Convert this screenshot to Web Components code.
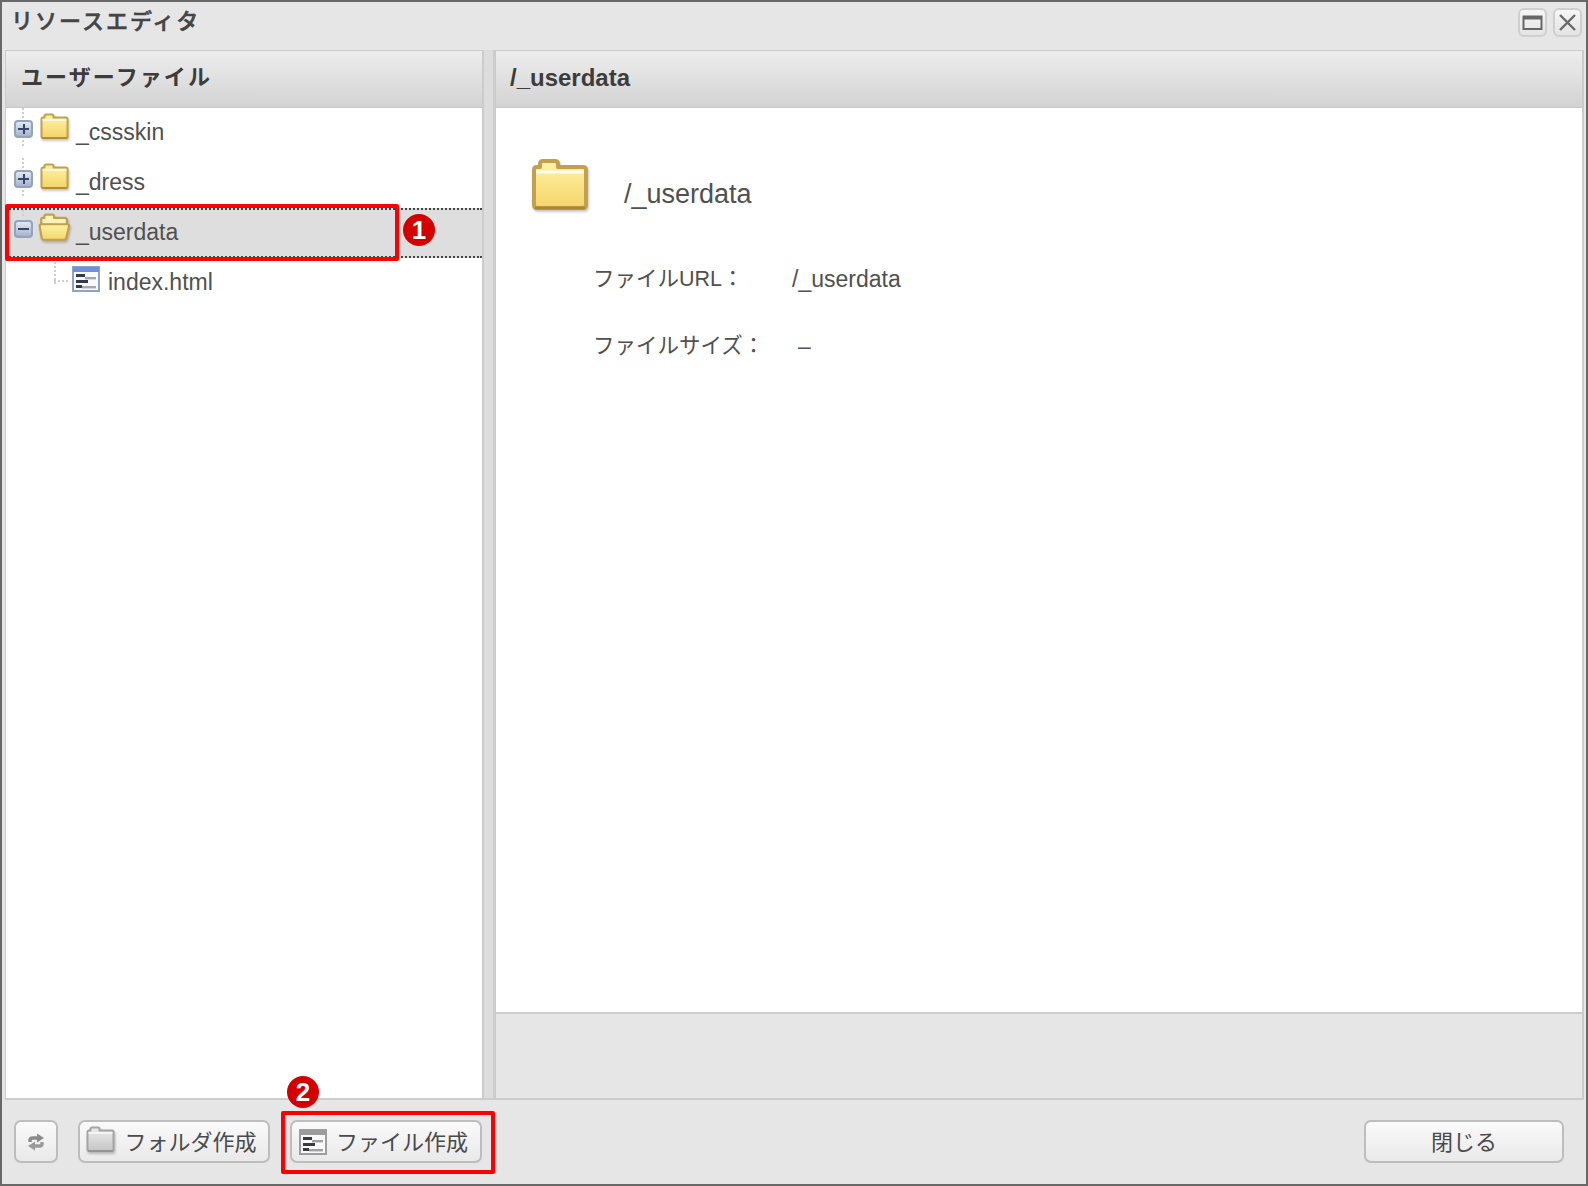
<!DOCTYPE html>
<html lang="ja">
<head>
<meta charset="utf-8">
<title>リソースエディタ</title>
<style>
html, body {
    margin: 0;
    padding: 0;
}
body {
    color: #4a4a4a;
    font-family: "Liberation Sans", "Noto Sans CJK JP", sans-serif;
}
</style>
</head>
<body>

<res-window>
    <res-titlebar slot="title">リソースエディタ</res-titlebar>

    <res-panel slot="left" heading="ユーザーファイル">
        <tree-row state="closed" guide="full"><folder-icon slot="icon"></folder-icon>_cssskin</tree-row>
        <tree-row state="closed" guide="full"><folder-icon slot="icon"></folder-icon>_dress</tree-row>
        <tree-row state="open" guide="top" selected><folder-icon slot="icon" open width="31"></folder-icon>_userdata</tree-row>
        <tree-row state="leaf"><file-icon slot="icon"></file-icon>index.html</tree-row>
    </res-panel>

    <res-panel slot="right" heading="/_userdata" latin footer>
        <file-details name="/_userdata" url="/_userdata" size="–"></file-details>
    </res-panel>

    <res-button slot="tools" square><refresh-icon slot="icon"></refresh-icon></res-button>
    <res-button slot="tools" width="192" shifted><folder-icon slot="icon" gray></folder-icon>フォルダ作成</res-button>
    <res-button slot="tools" width="192" shifted><file-icon slot="icon" gray></file-icon>ファイル作成</res-button>
    <res-button slot="actions" width="200">閉じる</res-button>

    <res-callout slot="over" n="1" box="5,204,394,57" badge="419,230"></res-callout>
    <res-callout slot="over" n="2" box="281,1111,214,63" badge="303,1092"></res-callout>
</res-window>

<script>
// window shell
let winTpl = document.createElement('template');
winTpl.innerHTML = `
<style>
:host {
    background: #e6e6e6;
    border: 2px solid #686868;
    box-sizing: border-box;
    display: flex;
    flex-direction: column;
    height: 1186px;
    position: relative;
    width: 1588px;
}
.panels {
    display: flex;
    flex: 1;
    min-height: 0;
    padding-left: 3px;
}
.gutter {
    background: #dddddd;
    border-bottom: 2px solid #cccccc;
    border-right: 3px solid #cccccc;
    flex: none;
    width: 9px;
}
.left { display: flex; flex: none; width: 479px; }
.right { display: flex; flex: 1; min-width: 0; padding-right: 2px; }
.foot {
    box-sizing: border-box;
    display: flex;
    flex: none;
    height: 84px;
    justify-content: space-between;
    padding: 20px 22px 0 12px;
}
.group { display: flex; gap: 20px; }
</style>
<slot name="title"></slot>
<div class="panels">
    <div class="left"><slot name="left"></slot></div>
    <div class="gutter"></div>
    <div class="right"><slot name="right"></slot></div>
</div>
<div class="foot">
    <div class="group"><slot name="tools"></slot></div>
    <div class="group"><slot name="actions"></slot></div>
</div>
<slot name="over"></slot>
`;
class ResWindow extends HTMLElement {
    constructor() {
        super();
        this.attachShadow({mode: 'open'}).appendChild(winTpl.content.cloneNode(true));
    }
}
customElements.define('res-window', ResWindow);

// title bar with the two window buttons
let titleTpl = document.createElement('template');
titleTpl.innerHTML = `
<style>
:host {
    align-items: flex-start;
    box-sizing: border-box;
    color: #444444;
    display: flex;
    flex: none;
    font-family: "Noto Sans CJK JP", sans-serif;
    font-size: 22px;
    font-weight: 500;
    height: 48px;
    justify-content: space-between;
    letter-spacing: 2px;
    padding: 0 4px 0 9px;
}
.text { line-height: 35px; -webkit-text-stroke: 0.5px #444444; }
.btns { display: flex; gap: 6px; padding-top: 6px; }
.btn {
    background: linear-gradient(#f6f6f6, #e4e4e4);
    border: 2px solid #cfcfcf;
    border-radius: 6px;
    box-sizing: border-box;
    display: block;
    height: 29px;
    width: 29px;
}
svg { display: block; }
</style>
<div class="text"><slot></slot></div>
<div class="btns">
    <div class="btn"><svg width="25" height="25" viewBox="0 0 25 25"><rect x="3.5" y="6.5" width="18" height="12.5" fill="none" stroke="#666" stroke-width="2"/><rect x="3" y="6" width="19" height="3.5" fill="#666"/></svg></div>
    <div class="btn"><svg width="25" height="25" viewBox="0 0 25 25"><path d="M5 5 L20 20 M20 5 L5 20" fill="none" stroke="#6a6a6a" stroke-width="2.4"/></svg></div>
</div>
`;
class ResTitlebar extends HTMLElement {
    constructor() {
        super();
        this.attachShadow({mode: 'open'}).appendChild(titleTpl.content.cloneNode(true));
    }
}
customElements.define('res-titlebar', ResTitlebar);

// panel: heading, body, optional grey strip below
let panelTpl = document.createElement('template');
panelTpl.innerHTML = `
<style>
:host {
    border: 1px solid #cccccc;
    border-bottom-width: 2px;
    border-right-width: 2px;
    box-sizing: border-box;
    display: flex;
    flex: 1;
    flex-direction: column;
    min-width: 0;
}
:host([latin]) { border-left: none; border-right-width: 2px; }
.head {
    background: linear-gradient(#ededed, #d3d3d3);
    border-bottom: 1px solid #c8c8c8;
    box-sizing: border-box;
    color: #3c3c3c;
    flex: none;
    font-family: "Noto Sans CJK JP", sans-serif;
    font-size: 22px;
    font-weight: 700;
    height: 57px;
    letter-spacing: 2.1px;
    line-height: 48px;
    padding-left: 15px;
}
:host([latin]) .head {
    font-family: "Liberation Sans", sans-serif;
    font-size: 24px;
    letter-spacing: 0;
    line-height: 53px;
    padding-left: 14px;
}
.body { background: #ffffff; flex: 1; min-height: 0; }
.strip {
    border-top: 2px solid #cccccc;
    display: none;
    flex: none;
    height: 84px;
}
:host([footer]) .strip { display: block; }
</style>
<div class="head"></div>
<div class="body"><slot></slot></div>
<div class="strip"></div>
`;
class ResPanel extends HTMLElement {
    constructor() {
        super();
        this.attachShadow({mode: 'open'}).appendChild(panelTpl.content.cloneNode(true));
        this.shadowRoot.querySelector('.head').textContent = this.getAttribute('heading');
    }
}
customElements.define('res-panel', ResPanel);

// one row of the file tree
let rowTpl = document.createElement('template');
rowTpl.innerHTML = `
<style>
:host {
    --nudge: 0px;
    box-sizing: border-box;
    color: #505050;
    display: flex;
    font-size: 23px;
    height: 50px;
    line-height: 48px;
    padding-left: 8px;
    position: relative;
}
:host([selected]) {
    --nudge: -2px;
    background: #dedede;
    border-bottom: 2px dotted #444444;
    border-top: 2px dotted #444444;
    line-height: 44px;
}
:host([state="leaf"]) { padding-left: 66px; }
.exp {
    background: linear-gradient(#e3e8f1, #a7b3ca);
    border: 2px solid #93a2bd;
    border-radius: 4px;
    box-sizing: border-box;
    flex: none;
    height: 18px;
    margin: calc(12px + var(--nudge)) 7px 0 0;
    position: relative;
    width: 19px;
}
.exp::before {
    background: #34456b;
    content: "";
    height: 2px;
    left: 2px;
    position: absolute;
    top: 6px;
    width: 11px;
}
.exp::after {
    background: #34456b;
    content: "";
    height: 10px;
    left: 6.5px;
    position: absolute;
    top: 2px;
    width: 2px;
}
:host([state="open"]) .exp::after { display: none; }
:host([state="leaf"]) .exp { display: none; }
.ico { flex: none; margin: calc(5px + var(--nudge)) 7px 0 0; width: 29px; }
:host([state="leaf"]) .ico { margin-top: 8px; margin-right: 8px; width: 28px; }
.guide {
    background: repeating-linear-gradient(#cfcfcf 0 2px, transparent 2px 4px);
    left: 16px;
    position: absolute;
    top: 0;
    width: 2px;
}
.hook {
    display: none;
    background: repeating-linear-gradient(90deg, #cfcfcf 0 2px, transparent 2px 4px);
    height: 2px;
    left: 48px;
    position: absolute;
    top: 22px;
    width: 14px;
}
:host([guide="full"]) .guide { height: 38px; }
:host([guide="top"]) .guide { height: 8px; }
:host([state="leaf"]) .guide { height: 22px; left: 48px; top: 4px; }
:host([state="leaf"]) .hook { display: block; }
</style>
<div class="guide"></div>
<div class="hook"></div>
<div class="exp"></div>
<div class="ico"><slot name="icon"></slot></div>
<div class="label"><slot></slot></div>
`;
class TreeRow extends HTMLElement {
    constructor() {
        super();
        this.attachShadow({mode: 'open'}).appendChild(rowTpl.content.cloneNode(true));
    }
}
customElements.define('tree-row', TreeRow);

// folder icon, scales with the width attribute
let folderSeq = 0;
class FolderIcon extends HTMLElement {
    constructor() {
        super();
        let w = this.getAttribute('width') || 29;
        let h = Math.round(w * 54 / 58);
        let id = 'f' + (++folderSeq);
        let gray = this.hasAttribute('gray');
        let top = gray ? '#ececec' : '#fff3a8';
        let bot = gray ? '#c6c6c6' : '#f4d468';
        let edge = gray ? '#a4a4a4' : '#c4a04c';
        let shape = `<path d="M3 47 V12 Q3 9 6 9 H9 V6 Q9 3 12 3 H24 Q27 3 27 6 V9 H52 Q55 9 55 12 V47 Q55 50 52 50 H6 Q3 50 3 47 Z" fill="url(#${id})" stroke="${edge}" stroke-width="4" stroke-linejoin="round"/>
            <path d="M5 14 H53" stroke="${gray ? '#fafafa' : '#fffdf0'}" stroke-width="3"/>
            <path d="M4 50 H54" stroke="${gray ? '#8f8f8f' : '#ab8635'}" stroke-width="3"/>`;
        if (this.hasAttribute('open')) {
            shape = `<path d="M6 40 V12 Q6 9 9 9 H12 V6 Q12 3 15 3 H27 Q30 3 30 6 V9 H50 Q54 9 54 12 V22 H6 Z" fill="#fff3b8" stroke="${edge}" stroke-width="4" stroke-linejoin="round"/>
            <path d="M3 24 Q3 21 6 21 H55 Q59 21 58 24 L53 47 Q52 50 49 50 H11 Q8 50 7 47 Z" fill="url(#${id})" stroke="${edge}" stroke-width="4" stroke-linejoin="round"/>`;
        }
        this.attachShadow({mode: 'open'}).innerHTML = `
<style>
:host { display: block; line-height: 0; width: ${w}px; height: ${h}px; }
:host([open]) { margin-left: -2px; }
svg { overflow: visible; filter: blur(.35px) drop-shadow(1px 2px 1px rgba(0,0,0,.22)); }
</style>
<svg width="${w}" height="${h}" viewBox="0 0 58 54">
    <defs><linearGradient id="${id}" x1="0" y1="0" x2="0" y2="1"><stop offset="0" stop-color="${top}"/><stop offset="1" stop-color="${bot}"/></linearGradient></defs>
    ${shape}
</svg>`;
    }
}
customElements.define('folder-icon', FolderIcon);

// html file icon
class FileIcon extends HTMLElement {
    constructor() {
        super();
        let gray = this.hasAttribute('gray');
        let bar = gray ? '#9c9c9c' : '#6f90dc';
        let edge = gray ? '#9e9e9e' : '#8fa2c8';
        let ink = gray ? '#3a3a3a' : '#343a4c';
        let soft = gray ? '#a0a0a0' : '#a8a8a8';
        this.attachShadow({mode: 'open'}).innerHTML = `
<style>
:host { display: block; height: 26px; line-height: 0; width: 28px; }
:host([gray]) { margin-top: 4px; }
svg { filter: blur(.25px); }
</style>
<svg width="28" height="26" viewBox="0 0 28 26">
    <rect x="1" y="1" width="26" height="24" fill="#f8f9fb" stroke="${edge}" stroke-width="2"/>
    <rect x="1" y="1" width="26" height="5" fill="${bar}"/>
    <rect x="4" y="8" width="9" height="3" fill="${ink}"/>
    <rect x="13" y="11" width="11" height="2.4" fill="${soft}"/>
    <rect x="4" y="14" width="12" height="3" fill="${ink}"/>
    <rect x="4" y="19" width="6" height="3" fill="${ink}"/>
    <rect x="10" y="20" width="14" height="2.4" fill="${soft}"/>
</svg>`;
    }
}
customElements.define('file-icon', FileIcon);

// refresh arrows
let refreshTpl = document.createElement('template');
refreshTpl.innerHTML = `
<style>
:host { display: block; height: 18px; line-height: 0; margin-top: 4px; width: 18px; }
</style>
<svg width="18" height="18" viewBox="0 0 18 18">
    <path d="M3 9 V7 Q3 5 5.5 5 H11" fill="none" stroke="#8a8a8a" stroke-width="3.4"/>
    <path d="M10 0.5 L17 5 L10 9.5 Z" fill="#8a8a8a"/>
    <path d="M15 9 V11 Q15 13 12.5 13 H7" fill="none" stroke="#9a9a9a" stroke-width="3.4"/>
    <path d="M8 8.5 L1 13 L8 17.5 Z" fill="#9a9a9a"/>
</svg>`;
class RefreshIcon extends HTMLElement {
    constructor() {
        super();
        this.attachShadow({mode: 'open'}).appendChild(refreshTpl.content.cloneNode(true));
    }
}
customElements.define('refresh-icon', RefreshIcon);

// footer button
let btnTpl = document.createElement('template');
btnTpl.innerHTML = `
<style>
:host {
    align-items: center;
    background: linear-gradient(#fafafa, #e9e9e9);
    border: 2px solid #bdbdbd;
    border-radius: 7px;
    box-sizing: border-box;
    color: #4a4a4a;
    display: flex;
    font-family: "Noto Sans CJK JP", sans-serif;
    font-size: 22px;
    gap: 9px;
    height: 43px;
    justify-content: center;
    padding-bottom: 4px;
}
:host([square]) { width: 44px; }
:host([shifted]) { padding-right: 5px; }
</style>
<slot name="icon"></slot>
<slot></slot>
`;
class ResButton extends HTMLElement {
    constructor() {
        super();
        this.attachShadow({mode: 'open'}).appendChild(btnTpl.content.cloneNode(true));
        if (this.hasAttribute('width')) this.style.width = this.getAttribute('width') + 'px';
    }
}
customElements.define('res-button', ResButton);

// details of the selected entry
let detailTpl = document.createElement('template');
detailTpl.innerHTML = `
<style>
:host {
    color: #505050;
    display: block;
    padding: 50px 0 0 35px;
}
.head { align-items: flex-start; display: flex; gap: 35px; }
.name { font-size: 27px; line-height: 72px; }
dl {
    display: grid;
    font-family: "Liberation Sans", "Noto Sans CJK JP", sans-serif;
    font-size: 21.5px;
    grid-auto-rows: 67px;
    grid-template-columns: 199px auto;
    line-height: 67px;
    margin: 16px 0 0 62px;
}
dt, dd { margin: 0; }
dd { font-size: 23px; }
dd.dash { padding-left: 6px; }
</style>
<div class="head">
    <folder-icon width="58"></folder-icon>
    <div class="name"></div>
</div>
<dl>
    <dt>ファイルURL：</dt><dd class="url"></dd>
    <dt>ファイルサイズ：</dt><dd class="dash size"></dd>
</dl>
`;
class FileDetails extends HTMLElement {
    constructor() {
        super();
        let root = this.attachShadow({mode: 'open'});
        root.appendChild(detailTpl.content.cloneNode(true));
        root.querySelector('.name').textContent = this.getAttribute('name');
        root.querySelector('.url').textContent = this.getAttribute('url');
        root.querySelector('.size').textContent = this.getAttribute('size');
    }
}
customElements.define('file-details', FileDetails);

// red highlight box with numbered badge, drawn over the window
class ResCallout extends HTMLElement {
    constructor() {
        super();
        let [x, y, w, h] = this.getAttribute('box').split(',');
        let [bx, by] = this.getAttribute('badge').split(',');
        this.attachShadow({mode: 'open'}).innerHTML = `
<style>
:host { display: block; left: -2px; position: absolute; top: -2px; }
.box {
    border: 4px solid #ff0000;
    border-radius: 2px;
    box-sizing: border-box;
    height: ${h}px;
    left: ${x}px;
    position: absolute;
    top: ${y}px;
    width: ${w}px;
}
.badge {
    background: #d40000;
    border-radius: 50%;
    color: #ffffff;
    font-family: "Liberation Sans", sans-serif;
    font-size: 26px;
    font-weight: 700;
    height: 32px;
    left: ${bx - 16}px;
    line-height: 32px;
    position: absolute;
    text-align: center;
    top: ${by - 16}px;
    width: 32px;
}
</style>
<div class="box"></div>
<div class="badge">${this.getAttribute('n')}</div>`;
    }
}
customElements.define('res-callout', ResCallout);
</script>
</body>
</html>
